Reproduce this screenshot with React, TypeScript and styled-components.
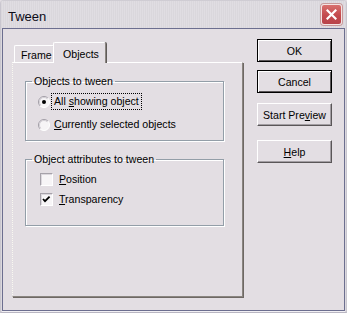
import React from 'react';
import styled, { createGlobalStyle } from 'styled-components';

const GlobalStyle = createGlobalStyle`
  html, body {
    margin: 0;
    padding: 0;
    background: #e3dee3;
  }
  body {
    font-family: 'Liberation Sans', Arial, sans-serif;
    font-size: 10.6px;
    color: #000;
  }
`;

const RadioIcon = ({ checked }: { checked?: boolean }) => (
  <svg width="12" height="12" viewBox="0 0 12 12">
    <circle cx="6" cy="6" r="5.5" fill="#f6f4f6" />
    <path d="M2.1 9.9 A5.5 5.5 0 0 1 9.9 2.1" stroke="#a19da6" fill="none" />
    <path d="M9.9 2.1 A5.5 5.5 0 0 1 2.1 9.9" stroke="#ffffff" fill="none" />
    <path d="M2.8 9.2 A4.5 4.5 0 0 1 9.2 2.8" stroke="#d2ced4" fill="none" />
    {checked && <circle cx="6" cy="6" r="2" fill="#000" />}
  </svg>
);

const CheckMark = () => (
  <svg width="11" height="11" viewBox="0 0 11 11">
    <path d="M2 5 L4 7.2 L8.6 2.6" stroke="#000" strokeWidth="1.8" fill="none" />
  </svg>
);

const CloseIcon = () => (
  <svg width="11" height="11" viewBox="0 0 11 11">
    <path d="M1.5 1.5 L9.5 9.5 M9.5 1.5 L1.5 9.5" stroke="#fff" strokeWidth="2.2" strokeLinecap="square" />
  </svg>
);

const App = () => {
  return (
    <>
      <GlobalStyle />
      <Window>
        <TitleBar>
          <Title>Tween</Title>
          <CloseButton>
            <CloseIcon />
          </CloseButton>
        </TitleBar>
        <Body>
          <TabArea>
            <TabStrip>
              <Tab>Frame</Tab>
              <Tab active>Objects</Tab>
            </TabStrip>
            <Panel>
              <GroupBox>
                <Legend>Objects to tween</Legend>
                <OptionRow rowHeight={23}>
                  <RadioIcon checked />
                  <FocusLabel>
                    All <u>s</u>howing object
                  </FocusLabel>
                </OptionRow>
                <OptionRow rowHeight={23}>
                  <RadioIcon />
                  <Label>
                    <u>C</u>urrently selected objects
                  </Label>
                </OptionRow>
              </GroupBox>
              <GroupBox topSpace={3} bottomSpace={16}>
                <Legend>Object attributes to tween</Legend>
                <OptionRow rowHeight={20} box>
                  <CheckBox />
                  <Label wide>
                    <u>P</u>osition
                  </Label>
                </OptionRow>
                <OptionRow rowHeight={20} box>
                  <CheckBox>
                    <CheckMark />
                  </CheckBox>
                  <Label wide>
                    <u>T</u>ransparency
                  </Label>
                </OptionRow>
              </GroupBox>
            </Panel>
          </TabArea>
          <ButtonColumn>
            <DialogButton framed>OK</DialogButton>
            <DialogButton framed gap={8}>Cancel</DialogButton>
            <DialogButton gap={10}>
              Start Pre<u>v</u>iew
            </DialogButton>
            <DialogButton gap={14}>
              <u>H</u>elp
            </DialogButton>
          </ButtonColumn>
        </Body>
      </Window>
    </>
  );
};

const Window = styled.div`
  width: 347px;
  height: 313px;
  box-sizing: border-box;
  display: flex;
  flex-direction: column;
  background: #dcd9de;
  border-left: 1px solid #c9c6cf;
  border-right: 1px solid #c9c6cf;
  border-bottom: 1px solid #b9b6c2;
  border-top-left-radius: 4px;
  border-top-right-radius: 4px;
  overflow: hidden;
`;

const TitleBar = styled.div`
  height: 28px;
  display: flex;
  align-items: center;
  justify-content: space-between;
  padding: 0 4px 0 7px;
  box-sizing: border-box;
  background: repeating-linear-gradient(90deg, #dad7dc 0 1px, #e0dde2 1px 2px);
  border-top: 1px solid #cfccd3;
`;

const Title = styled.span`
  font-size: 13px;
  color: #0c0c18;
  padding-top: 3px;
`;

const CloseButton = styled.div`
  width: 21px;
  height: 21px;
  box-sizing: border-box;
  display: flex;
  align-items: center;
  justify-content: center;
  border-radius: 3px;
  border: 1px solid #f4e4e4;
  background: linear-gradient(180deg, #d8706e 0%, #c34a4d 55%, #b8434a 100%);
  box-shadow: 0 0 0 1px #c89a9a;
`;

const Body = styled.div`
  flex: 1;
  display: flex;
  margin: 0 1px 1px 1px;
  padding: 10px 11px 0 9px;
  border: 1px solid #6c6e8f;
  background: #e3dee3;
  box-shadow: 0 1px 0 #f2f0f4;
`;

const TabArea = styled.div`
  width: 231px;
  padding-top: 3px;
  display: flex;
  flex-direction: column;
`;

const TabStrip = styled.div`
  height: 20px;
  display: flex;
  align-items: flex-end;
  padding-left: 2px;
  position: relative;
  z-index: 1;
`;

const Tab = styled.div<{ active?: boolean }>`
  box-sizing: border-box;
  height: ${({ active }) => (active ? '21px' : '17px')};
  padding: ${({ active }) => (active ? '2px 7px 0 9px' : '1px 3px 0 6px')};
  margin-bottom: ${({ active }) => (active ? '-1px' : '0')};
  margin-left: ${({ active }) => (active ? '-1px' : '0')};
  width: ${({ active }) => (active ? '53px' : '40px')};
  background: #e3dee3;
  border-top: 1px solid #ffffff;
  border-left: 1px solid #ffffff;
  border-right: 1px solid #8a8580;
  border-top-left-radius: 2px;
  border-top-right-radius: 2px;
  box-shadow: ${({ active }) => (active ? '1px 0 0 #5f5a58' : 'none')};
  display: flex;
  align-items: center;
  white-space: nowrap;
`;

const Panel = styled.div`
  height: 235px;
  box-sizing: border-box;
  padding: 12px 18px 0 12px;
  border-top: 1px solid #ffffff;
  border-left: 1px dotted #f8f8f0;
  border-right: 1px solid #8a8580;
  border-bottom: 1px solid #8a8580;
  box-shadow: 1px 1px 0 #6e6864;
  display: flex;
  flex-direction: column;
  gap: 12px;
`;

const GroupBox = styled.fieldset<{ topSpace?: number; bottomSpace?: number }>`
  margin: 0;
  padding: ${({ topSpace }) => topSpace ?? 2}px 0 ${({ bottomSpace }) => bottomSpace ?? 4}px 0;
  border: 1px solid #939ea8;
  box-shadow: 1px 1px 0 #ffffff, inset 1px 1px 0 #ffffff;
  min-width: 0;
`;

const Legend = styled.legend`
  margin-left: 6px;
  padding: 0 2px;
  line-height: 13px;
`;

const OptionRow = styled.div<{ rowHeight: number; box?: boolean }>`
  height: ${({ rowHeight }) => rowHeight}px;
  display: flex;
  align-items: center;
  padding-left: ${({ box }) => (box ? '14px' : '12px')};
  gap: 4px;
`;

const Label = styled.span<{ wide?: boolean }>`
  margin-left: ${({ wide }) => (wide ? '2px' : '0')};
  line-height: 13px;
  white-space: nowrap;
`;

const FocusLabel = styled(Label)`
  outline: 1px dotted #000;
  outline-offset: 1px;
  padding: 0 1px;
  margin-left: -1px;
`;

const CheckBox = styled.div`
  width: 13px;
  height: 13px;
  box-sizing: border-box;
  border-top: 1px solid #a6a2aa;
  border-left: 1px solid #a6a2aa;
  border-right: 1px solid #ffffff;
  border-bottom: 1px solid #ffffff;
  background: #f7f5f7;
  box-shadow: inset 1px 1px 0 #dcd8de;
  display: flex;
  align-items: center;
  justify-content: center;
`;

const ButtonColumn = styled.div`
  width: 75px;
  margin-left: 14px;
  display: flex;
  flex-direction: column;
`;

const DialogButton = styled.div<{ framed?: boolean; gap?: number }>`
  height: 23px;
  box-sizing: border-box;
  margin-top: ${({ gap }) => gap ?? 0}px;
  display: flex;
  align-items: center;
  justify-content: center;
  white-space: nowrap;
  background: #e3dee3;
  border: 1px solid ${({ framed }) => (framed ? '#000' : 'transparent')};
  border-color: ${({ framed }) =>
    framed ? '#000' : '#ffffff #5a5658 #5a5658 #ffffff'};
  box-shadow: ${({ framed }) =>
    framed
      ? 'inset 1px 1px 0 #ffffff, inset -1px -1px 0 #5a5658'
      : 'inset -1px -1px 0 #a39ea3'};
`;

export default App;
